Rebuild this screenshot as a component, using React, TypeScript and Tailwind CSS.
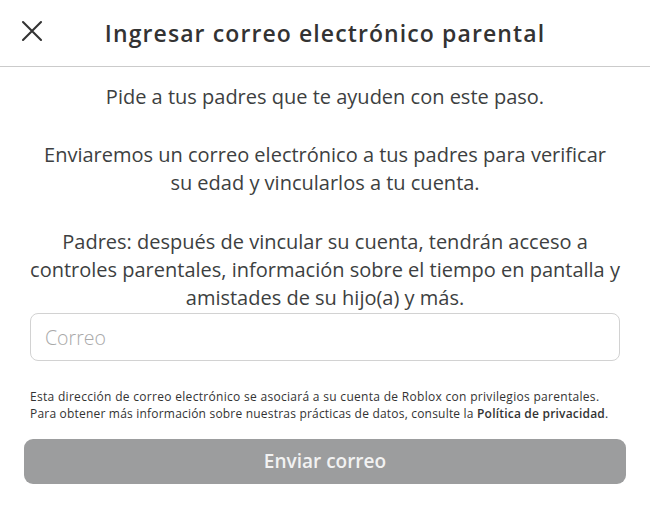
const font = { fontFamily: '"Open Sans", "Noto Sans", sans-serif' };

function CloseIcon() {
  return (
    <svg width="22" height="22" viewBox="0 0 22 22" fill="none" stroke="#333" strokeWidth="2.1" strokeLinecap="round">
      <path d="M2 2 L20 20 M20 2 L2 20" />
    </svg>
  );
}

export default function App() {
  return (
    <div className="w-[650px] h-[507px] bg-white text-[#3d3f41]" style={font}>
      {/* header */}
      <div className="h-[67px] flex items-center border-b border-[#cbcbcb]">
        <button className="w-[64px] h-full flex items-center justify-center pb-[5px]">
          <CloseIcon />
        </button>
        <h1 className="flex-1 text-center text-[23px] font-semibold text-[#333] tracking-[1.1px]">
          Ingresar correo electrónico parental
        </h1>
        <div className="w-[64px]" />
      </div>

      {/* content */}
      <div className="px-[24px] pt-[16px] flex flex-col">
        <p className="text-center text-[20px] leading-[28px] whitespace-nowrap">
          Pide a tus padres que te ayuden con este paso.
        </p>
        <p className="mt-[30px] text-center text-[20px] leading-[28px] whitespace-nowrap">
          Enviaremos un correo electrónico a tus padres para verificar
          <br />
          su edad y vincularlos a tu cuenta.
        </p>
        <p className="mt-[31px] text-center text-[20px] leading-[28px] whitespace-nowrap">
          Padres: después de vincular su cuenta, tendrán acceso a
          <br />
          controles parentales, información sobre el tiempo en pantalla y
          <br />
          amistades de su hijo(a) y más.
        </p>

        <input
          placeholder="Correo"
          className="mt-[1px] mx-[6px] h-[48px] rounded-[8px] border border-[#d2d2d2] px-[14px] text-[19.5px] font-light placeholder:text-[#a9a9a9] outline-none"
        />

        <div className="mt-[27px] ml-[6px] text-[12px] leading-[17px] tracking-[0.3px] text-[#333] whitespace-nowrap">
          <p>Esta dirección de correo electrónico se asociará a su cuenta de Roblox con privilegios parentales.</p>
          <p className="tracking-[0.2px]">
            Para obtener más información sobre nuestras prácticas de datos, consulte la{' '}
            <span className="font-semibold">Política de privacidad</span>.
          </p>
        </div>

        <button className="mt-[17px] h-[45px] rounded-[9px] bg-[#9c9d9e] text-[19px] font-semibold text-[#f2f2f2]">
          Enviar correo
        </button>
      </div>
    </div>
  );
}
